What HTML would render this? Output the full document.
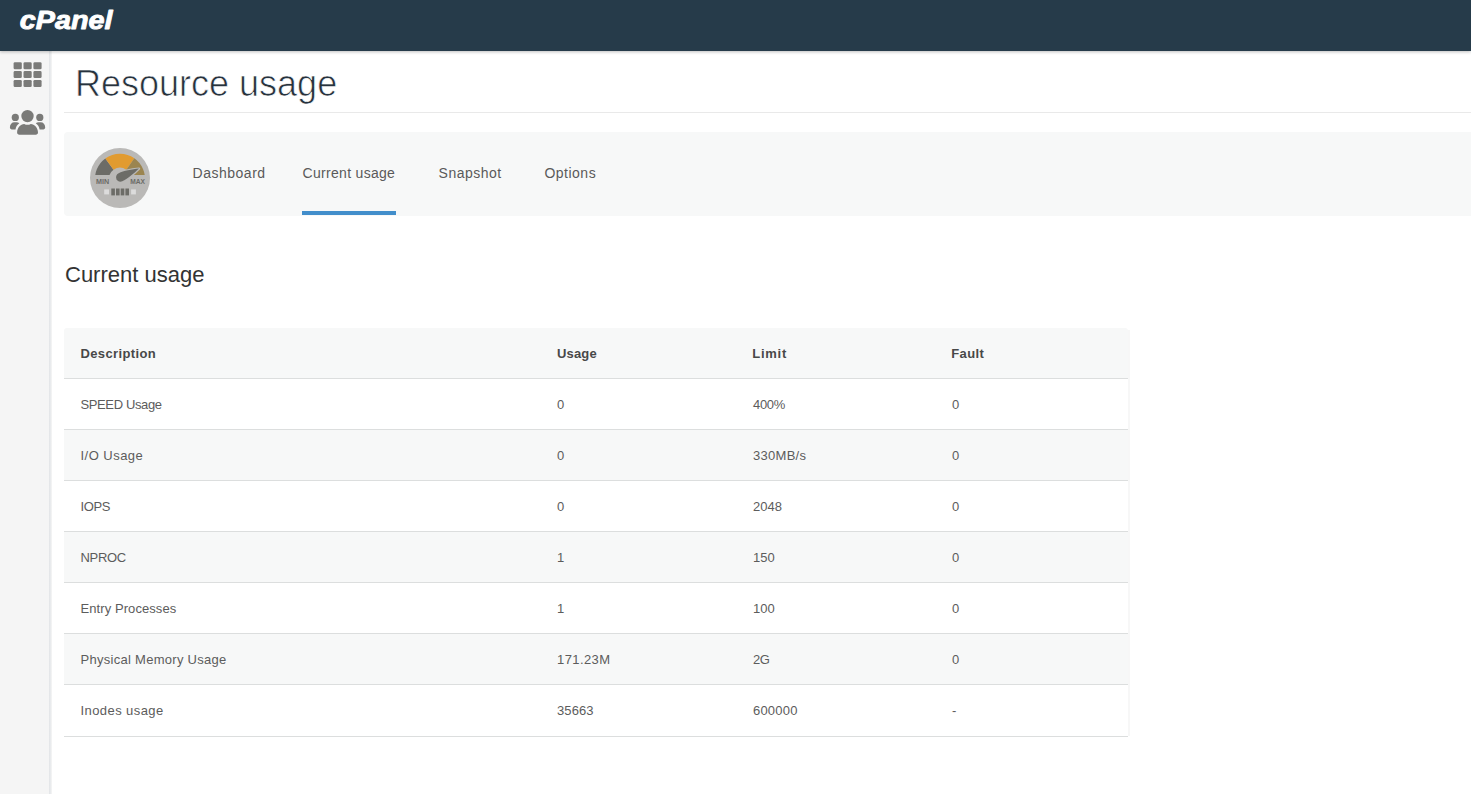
<!DOCTYPE html>
<html lang="en">
<head>
<meta charset="utf-8">
<title>Resource usage</title>
<style>
*{box-sizing:border-box;margin:0;padding:0}
html,body{width:1471px;height:794px;overflow:hidden;background:#fff;font-family:"Liberation Sans",sans-serif;color:#555}
body{position:relative}
#hdr{position:absolute;left:0;top:0;width:1471px;height:51px;background:#263b4a;box-shadow:0 1px 3px rgba(0,0,0,.25);z-index:5}
#logo{position:absolute;left:18px;top:6px}
#side{position:absolute;left:0;top:51px;width:52px;height:743px;background:linear-gradient(to right,#f5f5f5 0,#f5f5f5 49px,#e2e4e7 49px,#e9ebed 50.5px,#f6f6f6 52px)}
#side svg{position:absolute}
#title{position:absolute;left:75px;top:62px;font-size:36px;line-height:44px;color:#27323d;font-weight:400;white-space:nowrap;letter-spacing:0;-webkit-text-stroke:.7px #fff}
#rule{position:absolute;left:64px;top:112px;width:1407px;height:1px;background:#e9e9e9}
#nav{position:absolute;left:64px;top:132px;width:1420px;height:84px;background:#f7f8f8;border-radius:4px}
#gauge{position:absolute;left:26px;top:16px}
.tab{position:absolute;top:33px;font-size:14px;line-height:16px;color:#5a5a5a;white-space:nowrap}
#ul{position:absolute;left:238px;top:79px;width:94px;height:4px;background:#428ecb}
#h2{position:absolute;left:65px;top:260.5px;font-size:22px;line-height:28px;color:#333;white-space:nowrap}
#tbl{position:absolute;left:64px;top:328px;width:1064px;height:409px;background:#fff;border-radius:3px 3px 0 0;overflow:hidden}
#tblr{position:absolute;left:1128px;top:330px;width:2px;height:406px;background:#f7f7f7}
.row{position:absolute;left:0;width:1064px;height:51px;border-top:1px solid #dcdede}
.row.g{background:#f7f8f8}
.row span{position:absolute;top:18px;font-size:13px;line-height:15px;white-space:nowrap;color:#5c5c5c}
.row.h span{font-weight:700;color:#484848;top:18px}
.c1{left:16.5px}.c2{left:493px}.c3{left:689px}.c4{left:888px}
</style>
</head>
<body>
<div id="hdr">
<svg id="logo" width="110" height="40" viewBox="0 0 110 40"><text x="1.8" y="22.9" font-family="Liberation Sans, sans-serif" font-size="26" font-weight="700" font-style="italic" fill="#fff" stroke="#fff" stroke-width="0.9" stroke-linejoin="round" textLength="92.6" lengthAdjust="spacingAndGlyphs">cPanel</text></svg>
</div>
<div id="side"><svg style="left:13px;top:11px" width="29" height="26" viewBox="0 0 29 26"><rect x="0.6" y="0.2" width="8.2" height="7" rx="1.3" fill="#7b7b79"/><rect x="10.5" y="0.2" width="8.2" height="7" rx="1.3" fill="#7b7b79"/><rect x="20.4" y="0.2" width="8.2" height="7" rx="1.3" fill="#7b7b79"/><rect x="0.6" y="9.1" width="8.2" height="7" rx="1.3" fill="#7b7b79"/><rect x="10.5" y="9.1" width="8.2" height="7" rx="1.3" fill="#7b7b79"/><rect x="20.4" y="9.1" width="8.2" height="7" rx="1.3" fill="#7b7b79"/><rect x="0.6" y="18.0" width="8.2" height="7" rx="1.3" fill="#7b7b79"/><rect x="10.5" y="18.0" width="8.2" height="7" rx="1.3" fill="#7b7b79"/><rect x="20.4" y="18.0" width="8.2" height="7" rx="1.3" fill="#7b7b79"/></svg><svg style="left:8px;top:57px" width="40" height="30" viewBox="0 0 40 30"><g fill="#7a7a78"><circle cx="19.5" cy="8.1" r="6.2"/><circle cx="7.3" cy="9.4" r="3.6"/><circle cx="31.8" cy="9.4" r="3.6"/><path d="M9.1 24.6 C9.1 19.4 12.6 15.9 16.2 15.9 C17.4 16.5 18.4 16.8 19.5 16.8 C20.6 16.8 21.6 16.5 22.8 15.9 C26.4 15.9 30 19.4 30 24.6 C30 25.9 29 26.8 27.8 26.8 L11.3 26.8 C10.1 26.8 9.1 25.9 9.1 24.6 Z"/><path d="M1.9 19.2 C1.9 16.2 3.9 14.2 6.3 14.2 L8.6 14.2 C9.6 14.2 10.6 14.6 11.3 15.2 C9.3 16.5 7.9 18.7 7.5 21.4 L3.8 21.4 C2.7 21.4 1.9 20.5 1.9 19.2 Z"/><path d="M37.2 19.2 C37.2 16.2 35.2 14.2 32.8 14.2 L30.5 14.2 C29.5 14.2 28.5 14.6 27.8 15.2 C29.8 16.5 31.2 18.7 31.6 21.4 L35.3 21.4 C36.4 21.4 37.2 20.5 37.2 19.2 Z"/></g></svg></div>
<div id="title">Resource usage</div>
<div id="rule"></div>
<div id="nav">
<svg id="gauge" width="60" height="60" viewBox="0 0 60 60"><defs><clipPath id="gc"><rect x="0" y="0" width="60" height="26.9"/></clipPath></defs><circle cx="30" cy="30" r="30" fill="#bab9b7"/><g clip-path="url(#gc)"><path d="M5.38 35.04 A25 25 0 0 1 15.31 10.47 L23.53 21.80 A11 11 0 0 0 19.17 32.61 Z" fill="#6c6c67"/><path d="M15.31 10.47 A25 25 0 0 1 44.34 10.22 L36.31 21.69 A11 11 0 0 0 23.53 21.80 Z" fill="#e19b30"/><path d="M44.34 10.22 A25 25 0 0 1 54.62 35.04 L40.83 32.61 A11 11 0 0 0 36.31 21.69 Z" fill="#9b8550"/></g><path d="M49 20.6 C42 21.3 33.5 22.8 28.6 25.3 C26.3 26.5 25.5 29 26.5 31.3 C27.5 33.5 30 34.4 32.3 33.3 C37.2 30.9 44.2 25.4 49 20.6 Z" fill="#6c6c67" stroke="#bab9b7" stroke-width="2.4" stroke-linejoin="round" paint-order="stroke"/><text x="6" y="35.8" font-family="Liberation Sans, sans-serif" font-weight="700" font-size="7" fill="#6c6c67" textLength="13.2" lengthAdjust="spacingAndGlyphs">MIN</text><text x="40.2" y="35.8" font-family="Liberation Sans, sans-serif" font-weight="700" font-size="7" fill="#6c6c67" textLength="14.8" lengthAdjust="spacingAndGlyphs">MAX</text><rect x="14.2" y="41.4" width="4.8" height="5" fill="#dcdcdc"/><rect x="41.1" y="41.4" width="4.8" height="5" fill="#dcdcdc"/><rect x="21.3" y="40.5" width="3.6" height="6.9" fill="#6c6c67"/><rect x="26.0" y="40.5" width="3.6" height="6.9" fill="#6c6c67"/><rect x="30.7" y="40.5" width="3.6" height="6.9" fill="#6c6c67"/><rect x="35.4" y="40.5" width="3.6" height="6.9" fill="#6c6c67"/></svg>
<div class="tab" style="left:128.6px;letter-spacing:.5px">Dashboard</div>
<div class="tab" style="left:238.6px;letter-spacing:.3px">Current usage</div>
<div class="tab" style="left:374.6px;letter-spacing:.48px">Snapshot</div>
<div class="tab" style="left:480.4px;letter-spacing:.5px">Options</div>
<div id="ul"></div>
</div>
<div id="h2">Current usage</div>
<div id="tblr"></div>
<div id="tbl">
<div class="row h g" style="top:0;height:51px;border-top:0"><span class="c1" style="letter-spacing:0.37px">Description</span><span class="c2" style="letter-spacing:0.15px">Usage</span><span class="c3" style="letter-spacing:0.75px;margin-left:-.8px">Limit</span><span class="c4" style="letter-spacing:0.4px;margin-left:-.8px">Fault</span></div>
<div class="row" style="top:50px"><span class="c1" style="letter-spacing:-0.38px">SPEED Usage</span><span class="c2">0</span><span class="c3" style="letter-spacing:-0.3px">400%</span><span class="c4">0</span></div>
<div class="row g" style="top:101px"><span class="c1" style="letter-spacing:0.47px">I/O Usage</span><span class="c2">0</span><span class="c3" style="letter-spacing:0.28px">330MB/s</span><span class="c4">0</span></div>
<div class="row" style="top:152px"><span class="c1" style="letter-spacing:-0.4px">IOPS</span><span class="c2">0</span><span class="c3">2048</span><span class="c4">0</span></div>
<div class="row g" style="top:203px"><span class="c1" style="letter-spacing:-0.3px">NPROC</span><span class="c2">1</span><span class="c3">150</span><span class="c4">0</span></div>
<div class="row" style="top:254px"><span class="c1" style="letter-spacing:0.08px">Entry Processes</span><span class="c2">1</span><span class="c3">100</span><span class="c4">0</span></div>
<div class="row g" style="top:305px"><span class="c1" style="letter-spacing:0.28px">Physical Memory Usage</span><span class="c2" style="letter-spacing:0.4px">171.23M</span><span class="c3" style="letter-spacing:-0.5px">2G</span><span class="c4">0</span></div>
<div class="row" style="top:356px;height:53px;border-bottom:1px solid #dcdede"><span class="c1" style="letter-spacing:0.42px">Inodes usage</span><span class="c2" style="letter-spacing:0.1px">35663</span><span class="c3" style="letter-spacing:0.2px">600000</span><span class="c4">-</span></div>
</div>
</body>
</html>
